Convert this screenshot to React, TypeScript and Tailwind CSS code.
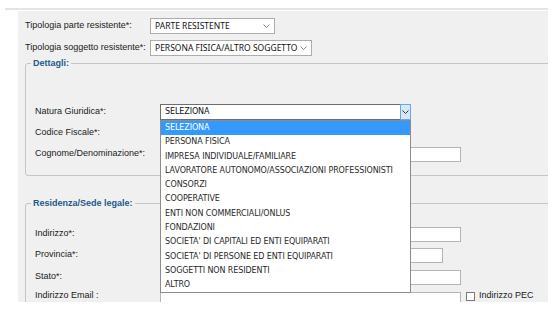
import React from "react";

const label = "w-[125px] shrink-0 text-[9px] text-[#1a1a1a] font-['Liberation_Sans',Arial,sans-serif]";
const input = "h-[15px] bg-white border border-[#b4b4b4]";

const items = [
  "SELEZIONA",
  "PERSONA FISICA",
  "IMPRESA INDIVIDUALE/FAMILIARE",
  "LAVORATORE AUTONOMO/ASSOCIAZIONI PROFESSIONISTI",
  "CONSORZI",
  "COOPERATIVE",
  "ENTI NON COMMERCIALI/ONLUS",
  "FONDAZIONI",
  "SOCIETA' DI CAPITALI ED ENTI EQUIPARATI",
  "SOCIETA' DI PERSONE ED ENTI EQUIPARATI",
  "SOGGETTI NON RESIDENTI",
  "ALTRO",
];

function Chevron({ color = "#8a8a8a" }: { color?: string }) {
  return (
    <svg width="7" height="4" viewBox="0 0 7 4" fill="none">
      <path d="M0.5 0.5 L3.5 3.5 L6.5 0.5" stroke={color} strokeWidth="1" />
    </svg>
  );
}

function Select({ text, width }: { text: string; width: string }) {
  return (
    <div
      className={`${width} h-[16px] flex items-center justify-between bg-white border border-[#adadad] pl-[4px] pr-[4px] text-[8.5px] text-[#111] font-['Noto_Sans','Open_Sans',sans-serif]`}
    >
      <span>{text}</span>
      <Chevron />
    </div>
  );
}

function Legend({ children }: { children: React.ReactNode }) {
  return (
    <legend className="ml-[-4px] px-[2px] h-[12px] leading-[12px] text-[9px] font-bold text-[#1d5a8a] font-['Liberation_Sans',Arial,sans-serif]">
      {children}
    </legend>
  );
}

export default function App() {
  return (
    <div className="w-[557px] h-[314px] bg-white overflow-hidden">
      <div className="ml-[5px] mt-[8px] h-[2px] w-[543px] bg-[#e4e4e4]" />
      <div className="relative ml-[18px] mt-[1px] w-[530px] h-[291px] bg-[#f0f0f0] overflow-hidden">
        <div className="pl-[7px] pt-[7px]">
          <div className="flex items-center h-[16px]">
            <span className={label}>Tipologia parte resistente*:</span>
            <Select text="PARTE RESISTENTE" width="w-[125px]" />
          </div>
          <div className="flex items-center h-[16px] mt-[6px]">
            <span className={label}>Tipologia soggetto resistente*:</span>
            <Select text="PERSONA FISICA/ALTRO SOGGETTO" width="w-[162px]" />
          </div>

          <fieldset className="mt-[1px] w-[540px] border border-[#c6c6c6] rounded-[3px] pl-[9px] pb-[13px]">
            <Legend>Dettagli:</Legend>
            <div className="pt-[35px]">
              <div className="flex items-center h-[16px]">
                <span className={label}>Natura Giuridica*:</span>
                <div className="w-[251px] h-[16px] flex items-center justify-between bg-white border border-[#6e6e6e] pl-[4px] text-[8px] tracking-[-0.1px] text-[#111] font-['DejaVu_Sans',Verdana,sans-serif]">
                  <span>SELEZIONA</span>
                  <div className="w-[11px] h-[16px] -mt-[1px] -mr-[1px] flex items-center justify-center bg-[#d4e8fa] border border-[#6aa6e0]">
                    <Chevron color="#333" />
                  </div>
                </div>
              </div>
              <div className="flex items-center h-[16px] mt-[5px]">
                <span className={label}>Codice Fiscale*:</span>
                <div className={`${input} w-[150px]`} />
              </div>
              <div className="flex items-center h-[16px] mt-[5px]">
                <span className={label}>Cognome/Denominazione*:</span>
                <div className={`${input} w-[301px]`} />
              </div>
            </div>
          </fieldset>

          <fieldset className="mt-[21px] w-[540px] h-[140px] border border-[#c6c6c6] rounded-[3px] pl-[9px]">
            <Legend>Residenza/Sede legale:</Legend>
            <div className="pt-[17px]">
              <div className="flex items-center h-[16px]">
                <span className={label}>Indirizzo*:</span>
                <div className={`${input} w-[301px]`} />
              </div>
              <div className="flex items-center h-[16px] mt-[5px]">
                <span className={label}>Provincia*:</span>
                <div className={`${input} w-[283px]`} />
              </div>
              <div className="flex items-center h-[16px] mt-[6px]">
                <span className={label}>Stato*:</span>
                <div className={`${input} w-[301px]`} />
              </div>
              <div className="flex items-center h-[16px] mt-[3px]">
                <span className={label}>Indirizzo Email :</span>
                <div className={`${input} w-[301px] self-start mt-[4px]`} />
                <div className="ml-[5px] w-[9px] h-[9px] bg-white border border-[#7a7a7a]" />
                <span className="ml-[4px] text-[9px] text-[#1a1a1a] font-['Liberation_Sans',Arial,sans-serif]">
                  Indirizzo PEC
                </span>
              </div>
            </div>
          </fieldset>
        </div>

        {/* open dropdown list */}
        <div className="absolute left-[142px] top-[109px] w-[251px] h-[173px] bg-white border border-[#8c8c8c] flex flex-col font-['DejaVu_Sans',Verdana,sans-serif] text-[8px] tracking-[-0.1px] text-[#2a2a2a]">
          {items.map((it, i) => (
            <div
              key={it}
              className={`h-[14.3px] leading-[14.3px] pl-[4px] whitespace-nowrap ${
                i === 0 ? "bg-[#3399ff] text-white" : ""
              }`}
            >
              {it}
            </div>
          ))}
        </div>
      </div>
    </div>
  );
}
